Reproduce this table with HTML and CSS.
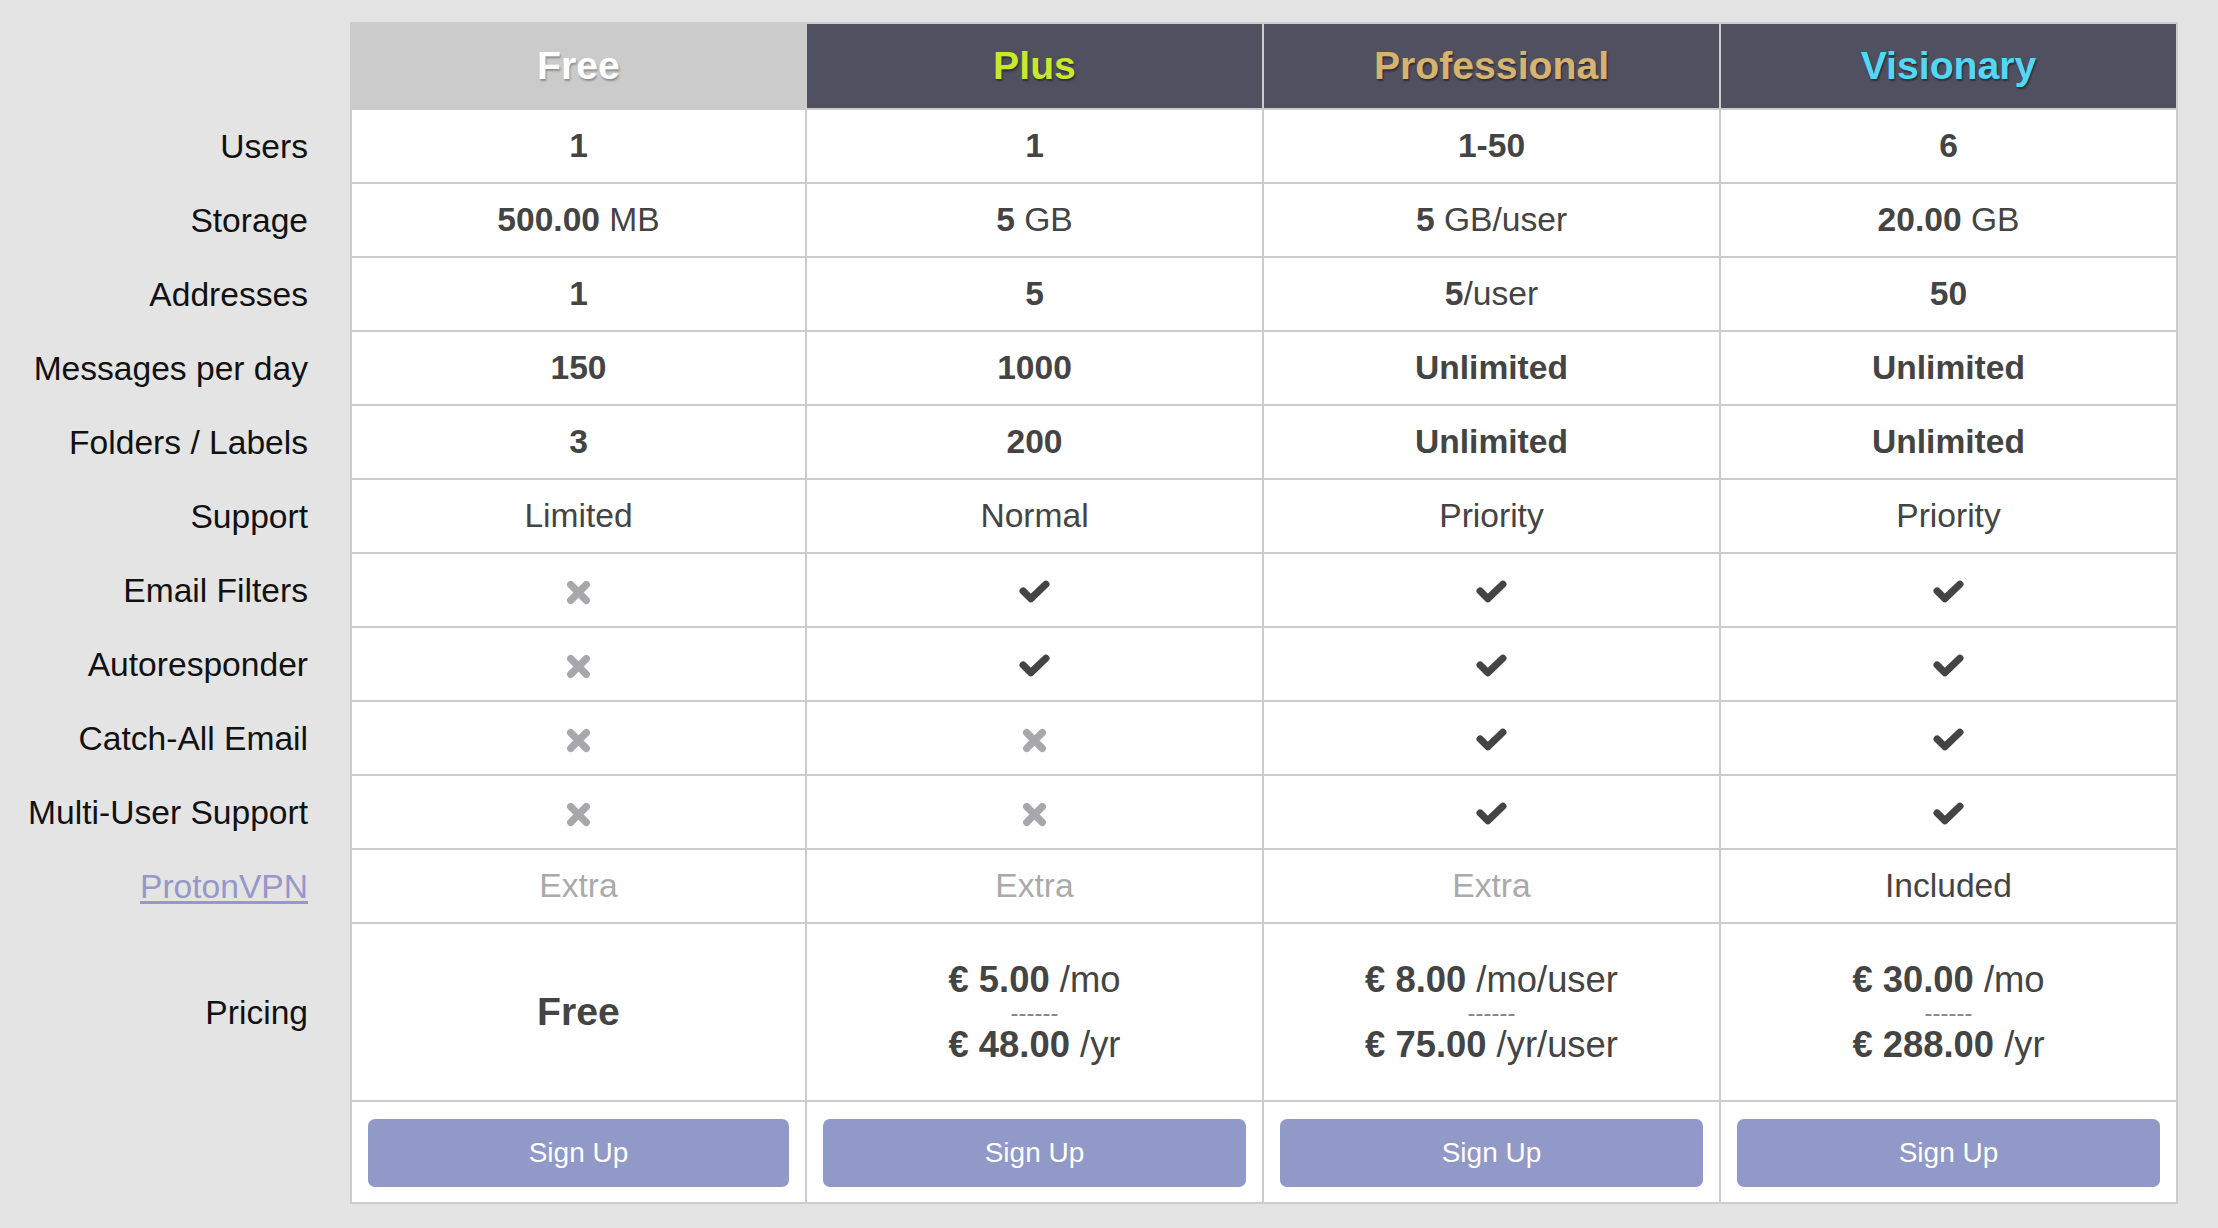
FILE: index.html
```html
<!DOCTYPE html>
<html lang="en">
<head>
  <meta charset="UTF-8">
  <title>Plans</title>
  <link rel="stylesheet" href="styles.css">
</head>
<body>
  <table class="plans">
    <colgroup>
      <col class="col-label">
      <col><col><col><col>
    </colgroup>
    <thead>
      <tr class="head">
        <th class="label"></th>
        <th class="plan free">Free</th>
        <th class="plan plus">Plus</th>
        <th class="plan pro">Professional</th>
        <th class="plan vis">Visionary</th>
      </tr>
    </thead>
    <tbody>
      <tr>
        <th class="label">Users</th>
        <td><b>1</b></td><td><b>1</b></td><td><b>1-50</b></td><td><b>6</b></td>
      </tr>
      <tr>
        <th class="label">Storage</th>
        <td><b>500.00</b> MB</td><td><b>5</b> GB</td><td><b>5</b> GB/user</td><td><b>20.00</b> GB</td>
      </tr>
      <tr>
        <th class="label">Addresses</th>
        <td><b>1</b></td><td><b>5</b></td><td><b>5</b>/user</td><td><b>50</b></td>
      </tr>
      <tr>
        <th class="label">Messages per day</th>
        <td><b>150</b></td><td><b>1000</b></td><td><b>Unlimited</b></td><td><b>Unlimited</b></td>
      </tr>
      <tr>
        <th class="label">Folders / Labels</th>
        <td><b>3</b></td><td><b>200</b></td><td><b>Unlimited</b></td><td><b>Unlimited</b></td>
      </tr>
      <tr>
        <th class="label">Support</th>
        <td>Limited</td><td>Normal</td><td>Priority</td><td>Priority</td>
      </tr>
      <tr>
        <th class="label">Email Filters</th>
        <td><svg class="no" viewBox="0 0 24 24"><path d="M4.5 4.5L19.5 19.5M19.5 4.5L4.5 19.5"/></svg></td>
        <td><svg class="yes" viewBox="0 0 30 23"><path d="M4 10.5L11.5 18L26 4"/></svg></td>
        <td><svg class="yes" viewBox="0 0 30 23"><path d="M4 10.5L11.5 18L26 4"/></svg></td>
        <td><svg class="yes" viewBox="0 0 30 23"><path d="M4 10.5L11.5 18L26 4"/></svg></td>
      </tr>
      <tr>
        <th class="label">Autoresponder</th>
        <td><svg class="no" viewBox="0 0 24 24"><path d="M4.5 4.5L19.5 19.5M19.5 4.5L4.5 19.5"/></svg></td>
        <td><svg class="yes" viewBox="0 0 30 23"><path d="M4 10.5L11.5 18L26 4"/></svg></td>
        <td><svg class="yes" viewBox="0 0 30 23"><path d="M4 10.5L11.5 18L26 4"/></svg></td>
        <td><svg class="yes" viewBox="0 0 30 23"><path d="M4 10.5L11.5 18L26 4"/></svg></td>
      </tr>
      <tr>
        <th class="label">Catch-All Email</th>
        <td><svg class="no" viewBox="0 0 24 24"><path d="M4.5 4.5L19.5 19.5M19.5 4.5L4.5 19.5"/></svg></td>
        <td><svg class="no" viewBox="0 0 24 24"><path d="M4.5 4.5L19.5 19.5M19.5 4.5L4.5 19.5"/></svg></td>
        <td><svg class="yes" viewBox="0 0 30 23"><path d="M4 10.5L11.5 18L26 4"/></svg></td>
        <td><svg class="yes" viewBox="0 0 30 23"><path d="M4 10.5L11.5 18L26 4"/></svg></td>
      </tr>
      <tr>
        <th class="label">Multi-User Support</th>
        <td><svg class="no" viewBox="0 0 24 24"><path d="M4.5 4.5L19.5 19.5M19.5 4.5L4.5 19.5"/></svg></td>
        <td><svg class="no" viewBox="0 0 24 24"><path d="M4.5 4.5L19.5 19.5M19.5 4.5L4.5 19.5"/></svg></td>
        <td><svg class="yes" viewBox="0 0 30 23"><path d="M4 10.5L11.5 18L26 4"/></svg></td>
        <td><svg class="yes" viewBox="0 0 30 23"><path d="M4 10.5L11.5 18L26 4"/></svg></td>
      </tr>
      <tr>
        <th class="label"><a href="#">ProtonVPN</a></th>
        <td class="extra">Extra</td><td class="extra">Extra</td><td class="extra">Extra</td><td>Included</td>
      </tr>
      <tr class="pricing">
        <th class="label">Pricing</th>
        <td><span class="free-price">Free</span></td>
        <td>
          <div class="price"><b>€ 5.00</b> /mo</div>
          <div class="sep">------</div>
          <div class="price"><b>€ 48.00</b> /yr</div>
        </td>
        <td>
          <div class="price"><b>€ 8.00</b> /mo/user</div>
          <div class="sep">------</div>
          <div class="price"><b>€ 75.00</b> /yr/user</div>
        </td>
        <td>
          <div class="price"><b>€ 30.00</b> /mo</div>
          <div class="sep">------</div>
          <div class="price"><b>€ 288.00</b> /yr</div>
        </td>
      </tr>
      <tr class="actions">
        <th class="label"></th>
        <td><button>Sign Up</button></td>
        <td><button>Sign Up</button></td>
        <td><button>Sign Up</button></td>
        <td><button>Sign Up</button></td>
      </tr>
    </tbody>
  </table>
</body>
</html>
```

FILE: styles.css
```css
body { margin: 0; padding: 22px 0 0; background: #e4e4e4; font-family: "Liberation Sans", Arial, sans-serif; }
.plans { width: 2178px; table-layout: fixed; border-collapse: separate; border-spacing: 0; }
.col-label { width: 350px; }
th, td { padding: 0; vertical-align: middle; }
tr { height: 74px; }
tr.head { height: 88px; }
tr.pricing { height: 178px; }
tr.actions { height: 102px; }

th.label { text-align: right; padding-right: 42px; font-size: 33.6px; font-weight: normal; color: #111; }
th.label a { color: #9797c9; text-decoration: underline; text-underline-offset: 3px; }

.plan { font-size: 39.2px; font-weight: bold; text-align: center; background: #505060; border-top: 2px solid #ccc; border-right: 2px solid #ccc; border-bottom: 2px solid #ccc; text-shadow: 1px 2px 2px rgba(0,0,0,0.45); }
.plan.free { background: #cbcbcb; color: #fff; border-left: 2px solid #ccc; text-shadow: 1px 2px 2px rgba(0,0,0,0.3); }
.plan.plus { color: #c9e82a; }
.plan.pro { color: #d6b46f; }
.plan.vis { color: #52d8f5; }

td { background: #fff; text-align: center; font-size: 33.6px; color: #444; border-right: 2px solid #ccc; border-bottom: 2px solid #ccc; }
td:nth-child(2) { border-left: 2px solid #ccc; }
td.extra { color: #aaa; }
td svg { display: inline-block; vertical-align: middle; fill: none; }
svg.yes { width: 31px; height: 24px; stroke: #444; stroke-width: 7; stroke-linecap: round; stroke-linejoin: round; }
svg.no { width: 25px; height: 25px; stroke: #a8a8ac; stroke-width: 7; stroke-linecap: round; }

.free-price { font-size: 39.2px; font-weight: bold; }
.price { font-size: 36.4px; line-height: 40px; }
.sep { font-size: 24px; line-height: 25px; color: #888; }

.actions td { padding: 0 16px; }
button { display: block; width: 100%; height: 68px; margin: 2px 0 0; border: none; border-radius: 7px; background: #9199c8; color: #fff; font-family: "Liberation Sans", Arial, sans-serif; font-size: 28px; cursor: pointer; }
```
